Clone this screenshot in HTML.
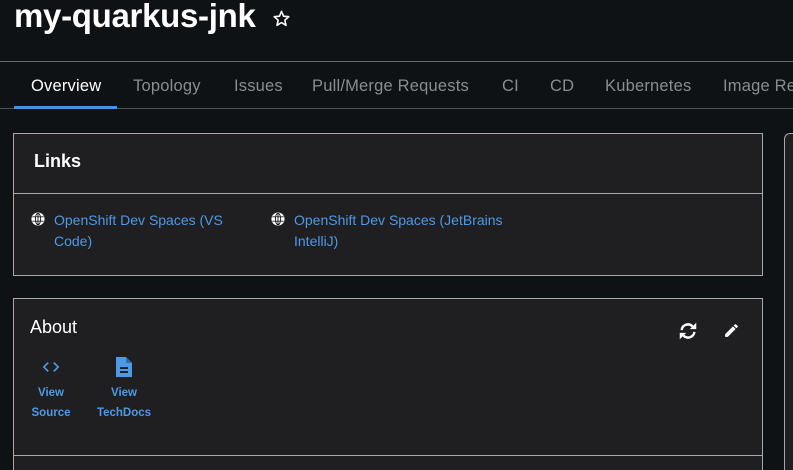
<!DOCTYPE html>
<html><head><style>
html,body{margin:0;width:793px;height:470px;overflow:hidden}
body{background:#0f1214;font-family:"Liberation Sans",sans-serif;position:relative}
.a{position:absolute}
.tab{position:absolute;top:77px;font-size:16.5px;color:#8a8d90;white-space:nowrap;letter-spacing:0.2px}
.card{position:absolute;background:#1f1f22;border:1px solid #a8a8a8;box-sizing:border-box}
.lk{color:#4d9ae6;font-size:14px;line-height:21px}
.bl{color:#4d9ae6;font-size:11.5px;font-weight:bold;text-align:center;line-height:20px}
</style></head><body>
<div class="a" style="left:14px;top:-3px;font-size:33px;font-weight:bold;color:#fff;letter-spacing:-0.3px">my-quarkus-jnk</div>
<svg class="a" style="left:272px;top:9px" width="19" height="19" viewBox="0 0 24 24"><path d="M12 3l2.6 6.1 6.6.6-5 4.4 1.5 6.5L12 17.2 6.3 20.6l1.5-6.5-5-4.4 6.6-.6z" fill="none" stroke="#fff" stroke-width="2" stroke-linejoin="round"/></svg>
<div class="a" style="left:0;top:61px;width:793px;height:1px;background:#6a6e73"></div>
<div class="a" style="left:0;top:108px;width:793px;height:1px;background:#4f5255"></div>
<div class="a" style="left:14px;top:106px;width:103px;height:3px;background:#4394e5"></div>
<div class="tab" style="left:31px;color:#fff">Overview</div>
<div class="tab" style="left:133px">Topology</div>
<div class="tab" style="left:234px">Issues</div>
<div class="tab" style="left:312px">Pull/Merge Requests</div>
<div class="tab" style="left:502px">CI</div>
<div class="tab" style="left:550px">CD</div>
<div class="tab" style="left:605px">Kubernetes</div>
<div class="tab" style="left:723px">Image Re</div>

<div class="card" style="left:13px;top:133px;width:750px;height:143px">
 <div class="a" style="left:20px;top:17px;font-size:18px;font-weight:bold;color:#fff">Links</div>
 <div class="a" style="left:0;top:59px;width:748px;height:1px;background:#a8a8a8"></div>
 <svg class="a" style="left:17px;top:78px" width="14" height="14" viewBox="0 0 16 16"><circle cx="8" cy="8" r="7.5" fill="#fff"/><g stroke="#1f1f22" stroke-width="1.1" fill="none"><ellipse cx="8" cy="8" rx="3" ry="6.5"/><path d="M1.5 5.5h13M1.5 10.5h13M8 1.5v13"/></g></svg>
 <div class="a lk" style="left:40px;top:76px;width:190px">OpenShift Dev Spaces (VS Code)</div>
 <svg class="a" style="left:257px;top:78px" width="14" height="14" viewBox="0 0 16 16"><circle cx="8" cy="8" r="7.5" fill="#fff"/><g stroke="#1f1f22" stroke-width="1.1" fill="none"><ellipse cx="8" cy="8" rx="3" ry="6.5"/><path d="M1.5 5.5h13M1.5 10.5h13M8 1.5v13"/></g></svg>
 <div class="a lk" style="left:280px;top:76px;width:225px">OpenShift Dev Spaces (JetBrains IntelliJ)</div>
</div>

<div class="card" style="left:13px;top:298px;width:750px;height:180px">
 <div class="a" style="left:16px;top:18px;font-size:18px;color:#fff">About</div>
 <svg class="a" style="left:662px;top:21px" width="24" height="22" viewBox="0 0 24 24"><path d="M5 11a7 7 0 0 1 12-4M19 13a7 7 0 0 1-12 4" fill="none" stroke="#fff" stroke-width="2.6"/><path d="M21 3v7h-7zM3 21v-7h7z" fill="#fff"/></svg>
 <svg class="a" style="left:709px;top:23px" width="17" height="17" viewBox="0 0 24 24"><path d="M3 17.25V21h3.75L17.8 9.94l-3.75-3.75zM20.7 7.04a1 1 0 0 0 0-1.41l-2.34-2.34a1 1 0 0 0-1.41 0l-1.83 1.83 3.75 3.75z" fill="#fff"/></svg>
 <svg class="a" style="left:27px;top:58px" width="20" height="20" viewBox="0 0 24 24"><path d="M9.4 16.6L4.8 12l4.6-4.6L8 6l-6 6 6 6zm5.2 0l4.6-4.6-4.6-4.6L16 6l6 6-6 6z" fill="#4d9ae6"/></svg>
 <svg class="a" style="left:100px;top:56px" width="20" height="24" viewBox="0 0 20 24"><path d="M2 2h10l6 6v14H2z" fill="#4d9ae6"/><path d="M12 2v6h6" fill="#2a6fbd"/><path d="M6 13h8M6 17h8" stroke="#1f1f22" stroke-width="2"/></svg>
 <div class="a bl" style="left:10px;top:84px;width:54px">View<br>Source</div>
 <div class="a bl" style="left:76px;top:84px;width:68px">View<br>TechDocs</div>
 <div class="a" style="left:0;top:156px;width:748px;height:1px;background:#a8a8a8"></div>
</div>

<div class="card" style="left:784px;top:133px;width:30px;height:360px;border-radius:6px"></div>
</body></html>
